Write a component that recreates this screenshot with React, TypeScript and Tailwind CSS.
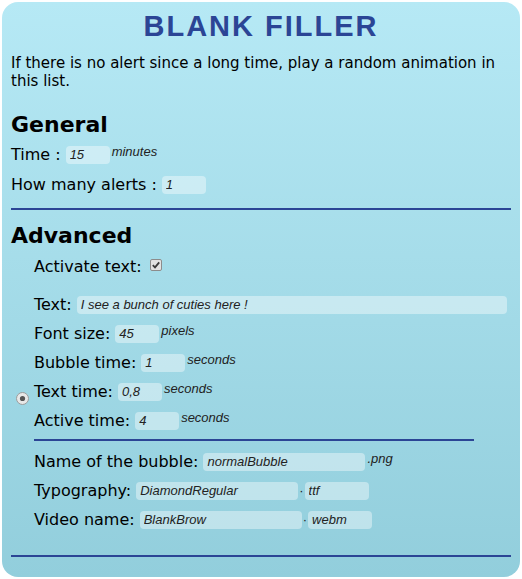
import { ReactNode } from 'react'

// small text field, as drawn in the settings panel
function Field({ value, width }: { value: string; width: string }) {
  return (
    <input
      readOnly
      value={value}
      className={`${width} h-[18px] shrink-0 self-center rounded-[4px] border-0 bg-white/40 px-[4px] font-['Liberation_Sans',Arial,sans-serif] text-[13px] leading-[18px] italic text-[#222] outline-none`}
    />
  )
}

function Suffix({ children }: { children: ReactNode }) {
  return (
    <span className="ml-[2px] mt-[4px] self-start font-['Liberation_Sans',Arial,sans-serif] text-[13px] leading-[15px] italic text-[#222]">
      {children}
    </span>
  )
}

function Dot() {
  return (
    <span className="mx-[1px] self-center font-['Liberation_Sans',Arial,sans-serif] text-[13px] leading-[15px] text-[#222]">
      ·
    </span>
  )
}

function Row({ label, children, lead }: { label: string; children?: ReactNode; lead?: ReactNode }) {
  return (
    <div className="flex h-[29px]">
      <div className="flex w-[23px] shrink-0">{lead}</div>
      <span className="mr-[5px] text-[16px] leading-[29px]">{label}</span>
      {children}
    </div>
  )
}

function Checkbox() {
  return (
    <svg width="12" height="12" viewBox="0 0 12 12" className="ml-[3px] mt-[7px] self-start">
      <rect x="0.5" y="0.5" width="11" height="11" rx="1.5" fill="#e2e2e2" stroke="#8c8c8c" />
      <path d="M2.8 6.2 L5 8.4 L9.2 3.4" fill="none" stroke="#3a3a3a" strokeWidth="1.8" />
    </svg>
  )
}

function Radio() {
  return (
    <svg width="13" height="13" viewBox="0 0 13 13" className="ml-[5px] mt-[15px] self-start">
      <circle cx="6.5" cy="6.5" r="6" fill="#e8e8e8" stroke="#9c9c9c" />
      <circle cx="6.5" cy="6.5" r="2.6" fill="#555" />
    </svg>
  )
}

export default function App() {
  return (
    <div className="min-h-screen bg-white pl-[2px] pt-[2px]">
      <div className="h-[575px] w-[518px] rounded-[16px] bg-linear-to-b from-[#b6e9f5] to-[#92cedc] px-[9px] pt-[7px] font-['DejaVu_Sans',Verdana,sans-serif] text-black">
        <div className="h-[34px] text-center font-['Liberation_Sans',Arial,sans-serif] text-[29px] leading-[34px] font-bold tracking-[2px] text-[#2b4595]">
          BLANK FILLER
        </div>
        <p className="mt-[11px] text-[15px] leading-[18px]">
          If there is no alert since a long time, play a random animation in this list.
        </p>

        <h2 className="mt-[22px] text-[22px] leading-[26px] font-bold">General</h2>
        <div className="mt-[2px] flex h-[29px]">
          <span className="mr-[5px] text-[16px] leading-[29px]">Time :</span>
          <Field value="15" width="w-[44px]" />
          <Suffix>minutes</Suffix>
        </div>
        <div className="mt-[1px] flex h-[29px]">
          <span className="mr-[5px] text-[16px] leading-[29px]">How many alerts :</span>
          <Field value="1" width="w-[44px]" />
        </div>
        <div className="mt-[9px] h-[2px] bg-[#2b4595]" />

        <h2 className="mt-[13px] text-[22px] leading-[26px] font-bold">Advanced</h2>
        <div className="mt-[3px]">
          <Row label="Activate text:">
            <Checkbox />
          </Row>
        </div>
        <div className="mt-[9px]">
          <Row label="Text:">
            <Field value="I see a bunch of cuties here !" width="w-[430px]" />
          </Row>
          <Row label="Font size:">
            <Field value="45" width="w-[44px]" />
            <Suffix>pixels</Suffix>
          </Row>
          <Row label="Bubble time:">
            <Field value="1" width="w-[44px]" />
            <Suffix>seconds</Suffix>
          </Row>
          <Row label="Text time:" lead={<Radio />}>
            <Field value="0,8" width="w-[44px]" />
            <Suffix>seconds</Suffix>
          </Row>
          <Row label="Active time:">
            <Field value="4" width="w-[44px]" />
            <Suffix>seconds</Suffix>
          </Row>
        </div>
        <div className="ml-[23px] mt-[4px] h-[2px] w-[440px] bg-[#2b4595]" />
        <div className="mt-[6px]">
          <Row label="Name of the bubble:">
            <Field value="normalBubble" width="w-[162px]" />
            <Suffix>.png</Suffix>
          </Row>
          <Row label="Typography:">
            <Field value="DiamondRegular" width="w-[162px]" />
            <Dot />
            <Field value="ttf" width="w-[64px]" />
          </Row>
          <Row label="Video name:">
            <Field value="BlankBrow" width="w-[162px]" />
            <Dot />
            <Field value="webm" width="w-[64px]" />
          </Row>
        </div>
        <div className="mt-[21px] h-[2px] bg-[#2b4595]" />
      </div>
    </div>
  )
}
